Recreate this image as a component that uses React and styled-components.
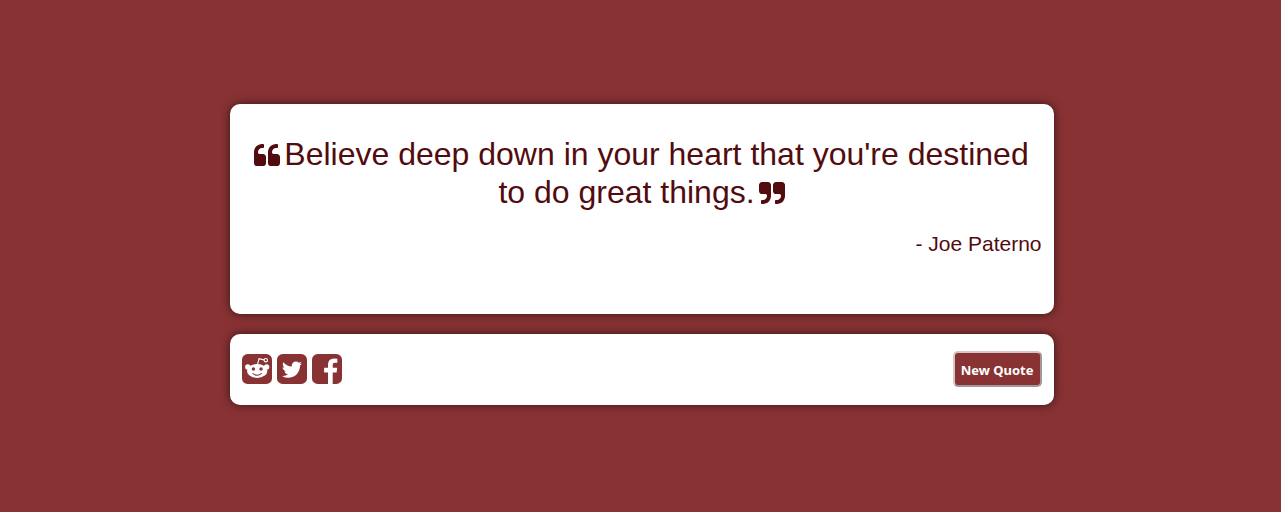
import React from "react";
import styled, { createGlobalStyle } from "styled-components";

const maroon = "#883234";
const ink = "#520c0f";

const GlobalStyle = createGlobalStyle`
  * { box-sizing: border-box; }
  body {
    margin: 0;
    background: ${maroon};
    font-family: "Liberation Sans", Arial, sans-serif;
    color: ${ink};
  }
`;

const Page = styled.main`
  min-height: 100vh;
  display: flex;
  flex-direction: column;
  align-items: center;
  justify-content: center;
  gap: 20px;
  padding: 0 12px 4px 14px;
`;

const Card = styled.section`
  width: 100%;
  max-width: 824px;
  background: #fff;
  border-radius: 10px;
  box-shadow: 0 0 10px rgba(0, 0, 0, 0.6);
`;

const QuoteCard = styled(Card)`
  min-height: 210px;
  padding: 31px 12px;
`;

const Quote = styled.blockquote`
  margin: 0 0 21px;
  font-size: 32px;
  line-height: 38px;
  text-align: center;
`;

const QuoteMark = styled.svg`
  width: 26px;
  height: 22px;
  fill: currentColor;
  vertical-align: -1px;

  &:first-child { margin-right: 4px; }
  &:last-child { margin-left: 4px; }
`;

const Author = styled.p`
  margin: 0;
  font-size: 21px;
  line-height: 24px;
  text-align: right;
`;

const ActionsCard = styled(Card)`
  display: flex;
  align-items: center;
  justify-content: space-between;
  padding: 17px 12px 18px;
`;

const Links = styled.nav`
  display: flex;
  gap: 5px;
  padding-top: 1px;
`;

const ShareLink = styled.a`
  display: flex;
  color: ${maroon};
`;

const ShareIcon = styled.svg`
  width: 30px;
  height: 30px;
  fill: currentColor;
`;

const NewQuote = styled.button`
  height: 36px;
  padding: 2px 6px 0;
  border: 2px solid;
  border-color: #d5c5c5 #a39799 #a39799 #d5c5c5;
  border-radius: 5px;
  background: ${maroon};
  color: #fff;
  font: bold 13px "Noto Sans", sans-serif;
`;

const openMark =
  "M832 960v384q0 80-56 136t-136 56h-384q-80 0-136-56t-56-136v-704q0-104 40.5-198.5t109.5-163.5 163.5-109.5 198.5-40.5h64q26 0 45 19t19 45v128q0 26-19 45t-45 19h-64q-106 0-181 75t-75 181v32q0 40 28 68t68 28h224q80 0 136 56t56 136zm896 0v384q0 80-56 136t-136 56h-384q-80 0-136-56t-56-136v-704q0-104 40.5-198.5t109.5-163.5 163.5-109.5 198.5-40.5h64q26 0 45 19t19 45v128q0 26-19 45t-45 19h-64q-106 0-181 75t-75 181v32q0 40 28 68t68 28h224q80 0 136 56t56 136z";
const closeMark =
  "M832 320v704q0 104-40.5 198.5t-109.5 163.5-163.5 109.5-198.5 40.5h-64q-26 0-45-19t-19-45v-128q0-26 19-45t45-19h64q106 0 181-75t75-181v-32q0-40-28-68t-68-28h-224q-80 0-136-56t-56-136v-384q0-80 56-136t136-56h384q80 0 136 56t56 136zm896 0v704q0 104-40.5 198.5t-109.5 163.5-163.5 109.5-198.5 40.5h-64q-26 0-45-19t-19-45v-128q0-26 19-45t45-19h64q106 0 181-75t75-181v-32q0-40-28-68t-68-28h-224q-80 0-136-56t-56-136v-384q0-80 56-136t136-56h384q80 0 136 56t56 136z";
const twitter =
  "M1408 610q-56 25-121 34 68-40 93-117-65 38-134 51-61-66-153-66-87 0-148.5 61.5t-61.5 148.5q0 29 5 48-129-7-242-65t-192-155q-29 50-29 106 0 114 91 175-47-1-100-26v2q0 75 50 133.5t123 72.5q-29 8-51 8-13 0-39-4 21 63 74.5 104t121.5 42q-116 90-261 90-26 0-50-3 148 94 322 94 112 0 210-35.5t168-95 120.5-137 75-162 24.5-168.5q0-18-1-27 63-45 105-109zm256-194v960q0 119-84.5 203.5t-203.5 84.5h-960q-119 0-203.5-84.5t-84.5-203.5v-960q0-119 84.5-203.5t203.5-84.5h960q119 0 203.5 84.5t84.5 203.5z";
const facebook =
  "M1376 128q119 0 203.5 84.5t84.5 203.5v960q0 119-84.5 203.5t-203.5 84.5h-188v-595h199l30-232h-229v-148q0-56 23.5-84t91.5-28l122-1v-207q-63-9-178-9-136 0-217.5 80t-81.5 226v171h-200v232h200v595h-532q-119 0-203.5-84.5t-84.5-203.5v-960q0-119 84.5-203.5t203.5-84.5h960z";

export default function App() {
  return (
    <>
      <GlobalStyle />
      <Page>
        <QuoteCard>
          <Quote>
            <QuoteMark viewBox="64 128 1664 1408" aria-hidden="true"><path d={openMark} /></QuoteMark>
            Believe deep down in your heart that you're destined to do great things.
            <QuoteMark viewBox="64 128 1664 1408" aria-hidden="true"><path d={closeMark} /></QuoteMark>
          </Quote>
          <Author>- Joe Paterno</Author>
        </QuoteCard>
        <ActionsCard>
          <Links>
            <ShareLink href="#reddit" aria-label="Reddit">
              <ShareIcon viewBox="0 0 30 30">
                <rect width="30" height="30" rx="5.6" />
                <g fill="#fff">
                  <ellipse cx="15.2" cy="16.9" rx="10.2" ry="7" />
                  <circle cx="5.8" cy="13" r="2.7" />
                  <circle cx="24.6" cy="13" r="2.7" />
                </g>
                <path d="M15.4 11 17 4.7l5 1.2" fill="none" stroke="#fff" strokeWidth="1.1" />
                <circle cx="23.8" cy="6.2" r="1.7" fill="none" stroke="#fff" strokeWidth="1.1" />
                <circle cx="11.4" cy="15" r="1.7" />
                <circle cx="19" cy="15" r="1.7" />
                <path d="M11 19.6q4.2 3.2 8.4 0" fill="none" stroke="currentColor" strokeWidth="1.1" strokeLinecap="round" />
              </ShareIcon>
            </ShareLink>
            <ShareLink href="#twitter" aria-label="Twitter">
              <ShareIcon viewBox="128 128 1536 1536"><path d={twitter} /></ShareIcon>
            </ShareLink>
            <ShareLink href="#facebook" aria-label="Facebook">
              <ShareIcon viewBox="128 128 1536 1536"><path d={facebook} /></ShareIcon>
            </ShareLink>
          </Links>
          <NewQuote type="button">New Quote</NewQuote>
        </ActionsCard>
      </Page>
    </>
  );
}
